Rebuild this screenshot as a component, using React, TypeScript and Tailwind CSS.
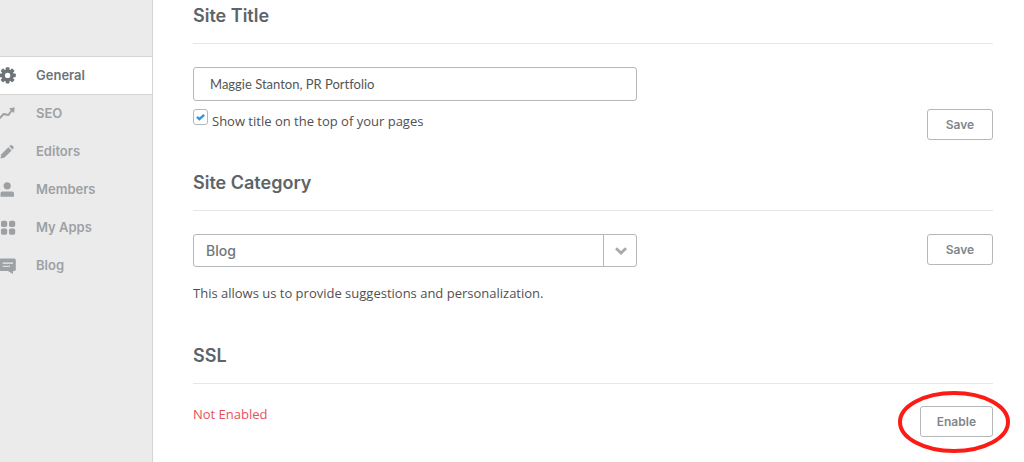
import React, {useState} from 'react'

const navItems = ['General', 'SEO', 'Editors', 'Members', 'My Apps', 'Blog']

const NavIcon = ({name}: {name: string}) => (
  <svg
    viewBox="0 0 16 16"
    fill="currentColor"
    aria-hidden="true"
    className="w-4 h-4 overflow-visible shrink-0">
    {name === 'General' && (
      <g>
        <circle cx="7.6" cy="7.4" r="4.4" fill="none" stroke="currentColor" strokeWidth="3.4" />
        {[0, 45, 90, 135, 180, 225, 270, 315].map(angle => (
          <rect
            key={angle}
            x="5.7"
            y="-0.8"
            width="3.8"
            height="3.2"
            rx="0.8"
            transform={`rotate(${angle} 7.6 7.4)`}
          />
        ))}
      </g>
    )}
    {name === 'SEO' && (
      <g>
        <path
          d="M-0.5 12.4 L3.6 8 L8.4 9 L12 4"
          fill="none"
          stroke="currentColor"
          strokeWidth="2"
          strokeLinejoin="round"
        />
        <path d="M9 2.6 L14.6 1.2 L14.2 7.2 Z" />
      </g>
    )}
    {name === 'Editors' && (
      <g>
        <path d="M0.4 14.4 L1.4 10.2 L8.4 3.2 L11.6 6.4 L4.6 13.4 Z" />
        <path d="M9.3 2.3 L10.3 1.3 Q11.2 0.6 12.1 1.4 L13.4 2.7 Q14.2 3.6 13.5 4.5 L12.5 5.5 Z" />
      </g>
    )}
    {name === 'Members' && (
      <g>
        <circle cx="7.2" cy="3.8" r="3.6" />
        <path d="M0.5 14.8 V11.4 Q0.5 9.6 2.3 9.6 H12.2 Q14 9.6 14 11.4 V14.8 Z" />
      </g>
    )}
    {name === 'My Apps' && (
      <g>
        <rect x="1" y="0.8" width="6.2" height="6.2" rx="1.7" />
        <rect x="9" y="0.8" width="6.2" height="6.2" rx="1.7" />
        <rect x="1" y="8.6" width="6.2" height="6.2" rx="1.7" />
        <rect x="9" y="8.6" width="6.2" height="6.2" rx="1.7" />
      </g>
    )}
    {name === 'Blog' && (
      <g>
        <path d="M1 0.6 H14.2 Q15.8 0.6 15.8 2.2 V11.4 Q15.8 13 14.2 13 H13 V16 L7.8 13 H1 Q-0.6 13 -0.6 11.4 V2.2 Q-0.6 0.6 1 0.6 Z" />
        <path d="M2.6 5.1 H13 M2.6 8.3 H10" stroke="#ebebeb" strokeWidth="1.1" />
      </g>
    )}
  </svg>
)

const OutlineButton = ({children}: {children: React.ReactNode}) => (
  <button
    type="button"
    className="h-[31px] min-w-[66px] px-4 text-xs font-semibold text-[#80878b] bg-white border border-[#b4b8ba] rounded-[3px] hover:bg-gray-50">
    {children}
  </button>
)

const SectionTitle = ({children}: {children: React.ReactNode}) => (
  <h2 className="pb-[15px] text-lg leading-6 font-semibold text-[#5c6468] border-b border-[#e6e6e6]">
    {children}
  </h2>
)

const App = () => {
  const [title, setTitle] = useState('Maggie Stanton, PR Portfolio')
  const [showTitle, setShowTitle] = useState(true)
  const [category, setCategory] = useState('Blog')

  return (
    <div className="flex min-h-screen bg-white font-['Inter','Liberation_Sans',sans-serif]">
      <aside className="w-[153px] shrink-0 pt-14 bg-[#ebebeb] border-r border-[#d4d4d4]">
        <nav>
          {navItems.map(item => (
            <a
              key={item}
              href="#"
              className={
                item === 'General'
                  ? 'flex items-center gap-5 h-[39px] text-[13px] font-semibold text-[#6c7478] bg-white border-y border-[#d4d4d4]'
                  : 'flex items-center gap-5 h-[38px] text-[13px] font-semibold text-[#9da1a3]'
              }>
              <NavIcon name={item} />
              {item}
            </a>
          ))}
        </nav>
      </aside>

      <main className="flex-1 min-w-0 pt-1 pl-10 pr-[31px]">
        <section>
          <SectionTitle>Site Title</SectionTitle>
          <div className="flex items-end justify-between gap-6 pt-[23px]">
            <div className="w-full max-w-[444px]">
              <input
                type="text"
                aria-label="Site Title"
                value={title}
                onChange={e => setTitle(e.target.value)}
                className="block w-full h-[34px] px-4 font-['Lato','Liberation_Sans',sans-serif] [font-variant-ligatures:none] text-[13px] text-[#555] bg-white border border-[#b4b8ba] rounded-[3px] focus:outline-none"
              />
              <div className="flex items-start gap-1 pt-2 pb-[11px]">
                <span className="relative w-[15px] h-4 shrink-0">
                  <input
                    id="show-title"
                    type="checkbox"
                    checked={showTitle}
                    onChange={e => setShowTitle(e.target.checked)}
                    className="block w-[15px] h-4 bg-white border border-[#b4b8ba] rounded-[3px] appearance-none"
                  />
                  {showTitle && (
                    <svg viewBox="0 0 15 16" className="absolute inset-0 pointer-events-none">
                      <path d="M4 7.9 L6.4 10.2 L11.2 5.8" fill="none" stroke="#2b96ea" strokeWidth="2.4" />
                    </svg>
                  )}
                </span>
                <label
                  htmlFor="show-title"
                  className="pt-1 font-['Open_Sans','Liberation_Sans',sans-serif] text-[13px] leading-4 text-[#505050]">
                  Show title on the top of your pages
                </label>
              </div>
            </div>
            <OutlineButton>Save</OutlineButton>
          </div>
        </section>

        <section className="pt-[31px]">
          <SectionTitle>Site Category</SectionTitle>
          <div className="flex items-start justify-between gap-6 pt-[23px]">
            <div className="w-full max-w-[444px]">
              <div className="relative">
                <select
                  aria-label="Site Category"
                  value={category}
                  onChange={e => setCategory(e.target.value)}
                  className="block w-full h-[33px] px-3 text-sm font-medium text-[#70777b] bg-white border border-[#b4b8ba] rounded-[3px] appearance-none focus:outline-none">
                  <option>Blog</option>
                  <option>Business</option>
                  <option>Portfolio</option>
                </select>
                <span className="absolute inset-y-0 right-0 flex items-center justify-center w-[34px] border-l border-[#b4b8ba] pointer-events-none">
                  <svg viewBox="0 0 12 8" className="w-3 h-2">
                    <path d="M1 1.2 L6 6 L11 1.2" fill="none" stroke="#a6aaac" strokeWidth="2.8" />
                  </svg>
                </span>
              </div>
              <p className="pt-4 font-['Open_Sans','Liberation_Sans',sans-serif] text-[13px] leading-5 text-[#505050]">
                This allows us to provide suggestions and personalization.
              </p>
            </div>
            <OutlineButton>Save</OutlineButton>
          </div>
        </section>

        <section className="pt-[41px]">
          <SectionTitle>SSL</SectionTitle>
          <div className="flex items-start justify-between gap-6 pt-[22px]">
            <p className="font-['Open_Sans','Liberation_Sans',sans-serif] text-[13px] leading-4 text-[#e8505b]">
              Not Enabled
            </p>
            <div className="relative">
              <OutlineButton>Enable</OutlineButton>
              {/* red highlight around the button */}
              <svg
                viewBox="0 0 112 63"
                className="absolute -top-4 -left-[22px] w-[112px] h-[63px] max-w-none pointer-events-none">
                <ellipse cx="56" cy="32" rx="54" ry="29" fill="none" stroke="#fb1c16" strokeWidth="4" />
              </svg>
            </div>
          </div>
        </section>
      </main>
    </div>
  )
}

export default App
